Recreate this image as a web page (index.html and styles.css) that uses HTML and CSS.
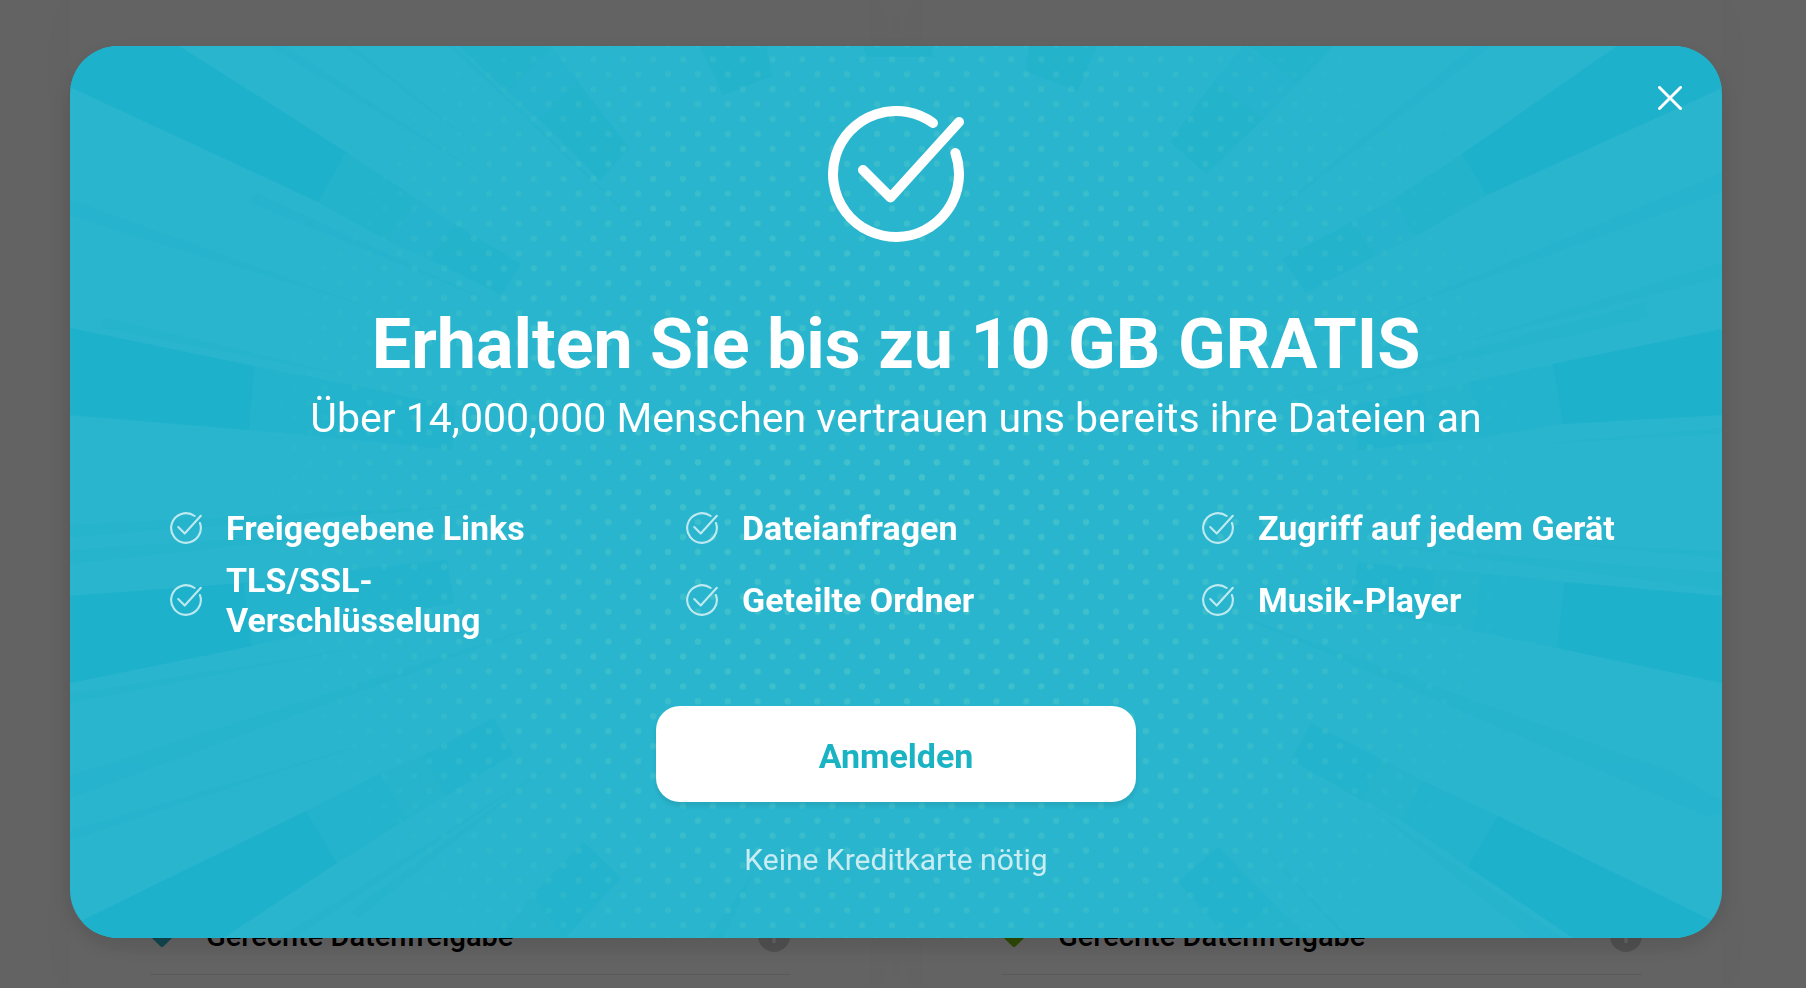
FILE: index.html
```html
<!DOCTYPE html>
<html lang="de">

<head>
    <meta charset="UTF-8">
    <meta name="viewport" content="width=device-width, initial-scale=1.0">
    <title>Bis zu 10 GB gratis</title>
    <link rel="stylesheet" href="styles.css">
</head>

<body>
    <!-- shared icons -->
    <svg width="0" height="0" class="sprite" aria-hidden="true">
        <symbol id="check" viewBox="0 0 136 136">
            <g fill="none" stroke="currentColor" stroke-linecap="round" stroke-linejoin="round">
                <path d="M105 17A63 63 0 1 0 127.400 47" />
                <path d="M35 64L62.500 91.500L131 16" />
            </g>
        </symbol>
    </svg>

    <main class="plans">
        <section class="plan">
            <div class="plan-row">
                <svg class="gem gem-teal" viewBox="0 0 24 24"><rect x="3.500" y="3.500" width="17" height="17" rx="2" transform="rotate(45 12 12)" /></svg>
                <span class="plan-text">Gerechte Datenfreigabe</span>
                <span class="info">i</span>
            </div>
        </section>
        <section class="plan">
            <div class="plan-row">
                <svg class="gem gem-green" viewBox="0 0 24 24"><rect x="3.500" y="3.500" width="17" height="17" rx="2" transform="rotate(45 12 12)" /></svg>
                <span class="plan-text">Gerechte Datenfreigabe</span>
                <span class="info">i</span>
            </div>
        </section>
    </main>

    <div class="overlay">
        <div class="modal" role="dialog" aria-modal="true" aria-labelledby="modal-title">
            <svg class="modal-bg" viewBox="70 46 1652 892" preserveAspectRatio="xMidYMid slice" aria-hidden="true">
                <defs>
                    <pattern id="dots" x="877.100" y="51.850" width="29.860" height="29.860" patternUnits="userSpaceOnUse">
                        <circle cx="14.930" cy="7.460" r="3.200" />
                        <circle cx="0" cy="22.390" r="3.200" />
                        <circle cx="29.860" cy="22.390" r="3.200" />
                    </pattern>
                    <radialGradient id="fade" gradientUnits="userSpaceOnUse" cx="896" cy="492" r="660">
                        <stop offset="0" stop-color="#fff" stop-opacity="1" />
                        <stop offset="0.600" stop-color="#fff" stop-opacity="0.600" />
                        <stop offset="1" stop-color="#fff" stop-opacity="0" />
                    </radialGradient>
                    <mask id="dot-mask" maskUnits="userSpaceOnUse" x="70" y="46" width="1652" height="892">
                        <rect x="70" y="46" width="1652" height="892" fill="url(#fade)" />
                    </mask>
                </defs>
                <!-- rays -->
                <g class="ray">
                    <path d="M70 46H179L346 152L318 202L70 87Z" />
                    <path d="M1617 46H1722V88L1487 195L1462 154Z" />
                    <path d="M70 328L254 366L249 430L70 415Z" />
                    <path d="M1722 329L1553 364L1563 424L1722 415Z" />
                    <path d="M70 596L243 583L252 646L70 683Z" />
                    <path d="M1722 596L1565 582L1557 648L1722 683Z" />
                    <path d="M83 920L306 811L337 863L223 938H70Z" />
                    <path d="M1713 921L1498 816L1468 867L1573 938H1722Z" />
                </g>
                <g class="ray ray-mid">
                    <path d="M346 152L417 199L388 241L318 202Z" />
                    <path d="M1462 154L1487 195L1416 236L1394 199Z" />
                    <path d="M254 366L372 389L370 441L249 430Z" />
                    <path d="M1553 364L1470 382L1479 438L1563 424Z" />
                    <path d="M243 583L368 568L375 617L252 646Z" />
                    <path d="M1565 582L1482 573L1474 631L1557 648Z" />
                    <path d="M306 811L379 774L407 819L337 863Z" />
                    <path d="M1498 816L1423 781L1401 820L1468 867Z" />
                    <path d="M459 46H551L508 92Z" />
                    <path d="M1334 46L1298 83L1248 46Z" />
                    <path d="M454 224L521 264L501 295L431 260Z" />
                    <path d="M1352 222L1374 257L1306 293L1283 259Z" />
                    <path d="M372 389L455 407L452 450L370 441Z" />
                    <path d="M1424 392L1432 442L1358 450L1353 405Z" />
                    <path d="M368 568L447 560L454 603L375 617Z" />
                    <path d="M1435 570L1428 622L1350 606L1358 562Z" />
                    <path d="M423 756L494 718L513 754L446 796Z" />
                    <path d="M1381 759L1362 800L1291 760L1311 723Z" />
                    <path d="M578 82L629 148L600 180L540 120Z" />
                    <path d="M1263 119L1206 174L1170 141L1214 82Z" />
                    <path d="M700 46H766L772 76L723 95Z" />
                    <path d="M863 46H933V57H867Z" />
                    <path d="M1029 46H1097L1077 91L1026 71Z" />
                    <path d="M584 842L621 878L565 938L532 895Z" />
                    <path d="M1218 847L1273 903L1228 938L1178 882Z" />
                </g>
                <g class="ray ray-soft">
                    <path d="M417 199L454 224L431 260L388 241Z" />
                    <path d="M1394 199L1416 236L1374 257L1352 222Z" />
                    <path d="M1470 382L1479 438L1432 442L1424 392Z" />
                    <path d="M1482 573L1474 631L1428 622L1435 570Z" />
                    <path d="M379 774L423 756L446 796L407 819Z" />
                    <path d="M1423 781L1401 820L1362 800L1381 759Z" />
                    <path d="M551 46L578 82L540 120L508 92Z" />
                    <path d="M1298 83L1263 119L1214 82L1244 46Z" />
                    <path d="M532 895L565 938H500Z" />
                    <path d="M1273 903L1310 938H1228Z" />
                    <!-- thin streaks -->
                    <path d="M269 46H284L483 175Z" />
                    <path d="M346 46H352L482 150Z" />
                    <path d="M449 46H455L663 248Z" />
                    <path d="M70 200V216L363 305Z" />
                    <path d="M249 202L256 193L494 303Z" />
                    <path d="M101 328L103 317L345 375Z" />
                    <path d="M70 776V798L550 622Z" />
                    <path d="M70 831V840L384 738Z" />
                    <path d="M70 694V703L357 648Z" />
                    <path d="M70 525V537L500 504Z" />
                    <path d="M70 550V564L400 528Z" />
                    <path d="M280 938H295L551 765Z" />
                    <path d="M350 912L358 918L551 765Z" />
                    <path d="M1474 46H1491L1248 233Z" />
                    <path d="M1722 173V192L1378 317Z" />
                    <path d="M1722 263V277L1455 345Z" />
                    <path d="M1646 302L1648 318L1294 398Z" />
                    <path d="M1722 428V434L1535 444Z" />
                    <path d="M1722 573V590L1378 545Z" />
                    <path d="M1722 551V558L1550 543Z" />
                    <path d="M1722 801V814L1707 816L1237 615L1669 771Z" />
                    <path d="M1531 938H1562L1374 810Z" />
                    <path d="M1345 938H1350L1238 821Z" />
                    <path d="M708 938H724L755 870Z" />
                </g>
                <rect class="dots" x="70" y="46" width="1652" height="892" fill="url(#dots)" mask="url(#dot-mask)" />
            </svg>

            <button class="close" type="button" aria-label="Schließen">
                <svg viewBox="0 0 24 24"><path d="M1.500 1.500L22.500 22.500M22.500 1.500L1.500 22.500" /></svg>
            </button>

            <svg class="hero-icon"><use href="#check" /></svg>
            <h1 id="modal-title" class="title">Erhalten Sie bis zu 10 GB GRATIS</h1>
            <p class="subtitle">Über 14,000,000 Menschen vertrauen uns bereits ihre Dateien an</p>

            <ul class="features">
                <li class="feature"><svg class="feature-icon"><use href="#check" /></svg><span>Freigegebene Links</span></li>
                <li class="feature"><svg class="feature-icon"><use href="#check" /></svg><span>Dateianfragen</span></li>
                <li class="feature"><svg class="feature-icon"><use href="#check" /></svg><span>Zugriff auf jedem Gerät</span></li>
                <li class="feature"><svg class="feature-icon"><use href="#check" /></svg><span>TLS/SSL-Verschlüsselung</span></li>
                <li class="feature"><svg class="feature-icon"><use href="#check" /></svg><span>Geteilte Ordner</span></li>
                <li class="feature"><svg class="feature-icon"><use href="#check" /></svg><span>Musik-Player</span></li>
            </ul>

            <button class="signup" type="button">Anmelden</button>
            <p class="note">Keine Kreditkarte nötig</p>
        </div>
    </div>
</body>

</html>
```
FILE: styles.css
```css
* {
    box-sizing: border-box;
}

body {
    margin: 0;
    background: #fff;
    font-family: Roboto, "Liberation Sans", sans-serif;
}

.sprite {
    position: absolute;
}

/* page behind the modal */
.plans {
    display: flex;
    gap: 52px;
    height: 100vh;
    padding: 0 84px 0 70px;
    overflow: hidden;
}

.plan {
    flex: 1;
    display: flex;
    flex-direction: column;
    justify-content: flex-end;
    padding: 0 80px 13px;
    background: #fff;
    box-shadow: 0 0 48px rgba(0, 0, 0, 0.04);
}

.plan-row {
    display: flex;
    align-items: center;
    padding-bottom: 18px;
    border-bottom: 1px solid #e6e6e6;
}

.gem {
    width: 24px;
    height: 24px;
    margin-right: 32px;
}

.gem-teal {
    fill: #2eb6cb;
}

.gem-green {
    fill: #7bbb15;
}

.plan-text {
    flex: 1;
    font-size: 29px;
    font-weight: 500;
    line-height: 40px;
    color: #000;
}

.info {
    width: 32px;
    height: 32px;
    border-radius: 50%;
    background: #d1d1d1;
    color: #fff;
    font-size: 22px;
    font-weight: 700;
    line-height: 32px;
    text-align: center;
}

/* modal */
.overlay {
    position: fixed;
    inset: 0;
    padding: 46px 84px 50px 70px;
    background: rgba(0, 0, 0, 0.61);
    overflow: auto;
}

.modal {
    position: relative;
    display: flex;
    flex-direction: column;
    align-items: center;
    min-height: 100%;
    padding: 60px 52px 58px;
    border-radius: 48px;
    background: #28b5cd;
    box-shadow: 0 8px 24px rgba(0, 0, 0, 0.12), 0 8px 48px rgba(0, 0, 0, 0.03);
    color: #fff;
    text-align: center;
}

.modal > * {
    position: relative;
}

.modal > .modal-bg {
    position: absolute;
    inset: 0;
    width: 100%;
    height: 100%;
    border-radius: 48px;
}

.ray {
    fill: #1eb1cb;
}

.ray-mid {
    opacity: 0.45;
}

.ray-soft {
    opacity: 0.2;
}

.dots {
    opacity: 0.5;
}

#dots {
    fill: #5fcfcb;
}

.modal > .close {
    position: absolute;
    top: 40px;
    right: 40px;
    width: 24px;
    height: 24px;
    padding: 0;
    border: 0;
    background: none;
    cursor: pointer;
}

.close svg {
    display: block;
    width: 24px;
    height: 24px;
    fill: none;
    stroke: #fff;
    stroke-width: 3;
    stroke-linecap: round;
}

.hero-icon {
    width: 136px;
    height: 136px;
    stroke-width: 10;
}

.title {
    margin: 60px 0 0;
    font-size: 70px;
    font-weight: 700;
    line-height: 84px;
}

.subtitle {
    margin: 0;
    font-size: 41px;
    line-height: 64px;
}

.features {
    display: grid;
    grid-template-columns: repeat(3, 1fr);
    gap: 12px 0;
    align-self: stretch;
    margin: 58px 0 0;
    padding: 0;
    list-style: none;
}

.feature {
    display: flex;
    align-items: center;
    gap: 24px;
    padding: 0 48px;
    font-size: 34px;
    font-weight: 700;
    line-height: 40px;
    text-align: left;
}

.feature-icon {
    flex: none;
    width: 32px;
    height: 32px;
    color: rgba(255, 255, 255, 0.7);
    stroke-width: 9;
}

.signup {
    width: 480px;
    max-width: 100%;
    height: 96px;
    margin-top: 66px;
    padding: 4px 24px 0;
    border: 0;
    border-radius: 24px;
    background: #fff;
    box-shadow: 0 4px 4px rgba(0, 0, 0, 0.08);
    color: #1ab3c4;
    font-family: inherit;
    font-size: 34px;
    font-weight: 700;
    cursor: pointer;
}

.note {
    margin: 38px 0 0;
    font-size: 30px;
    line-height: 40px;
    color: rgba(255, 255, 255, 0.75);
}
```
